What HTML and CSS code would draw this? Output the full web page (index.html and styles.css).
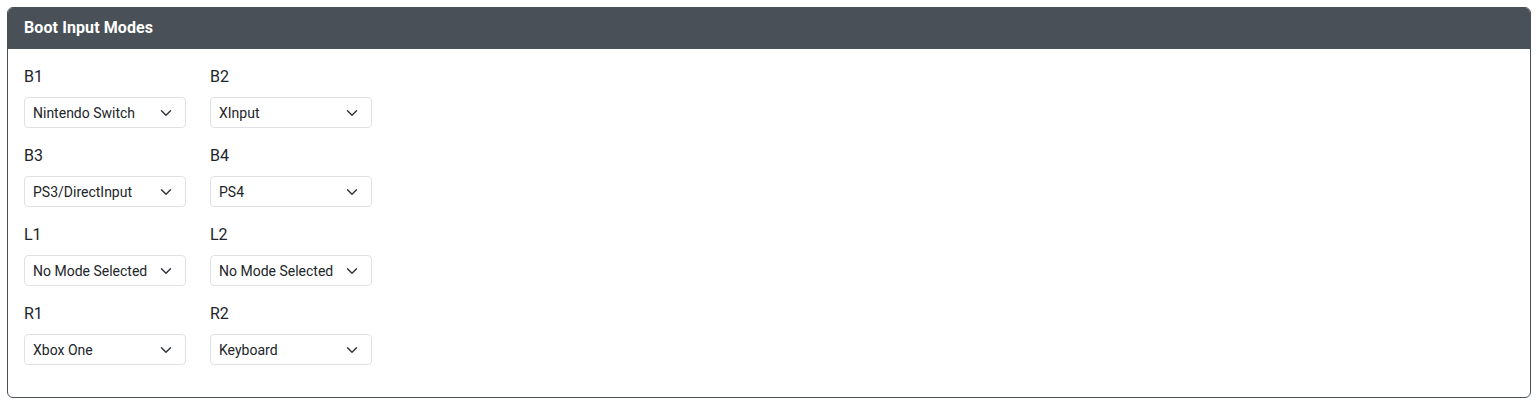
FILE: index.html
```html
<!DOCTYPE html>
<html lang="en">
<head>
<meta charset="utf-8">
<title>Boot Input Modes</title>
<link rel="stylesheet" href="styles.css">
</head>
<body>
<div class="card">
  <div class="card-header">Boot Input Modes</div>
  <div class="card-body">
    <div class="grid">
      <div class="field">
        <label for="b1">B1</label>
        <select id="b1" class="form-select"><option>Nintendo Switch</option></select>
      </div>
      <div class="field">
        <label for="b2">B2</label>
        <select id="b2" class="form-select"><option>XInput</option></select>
      </div>
      <div class="field">
        <label for="b3">B3</label>
        <select id="b3" class="form-select"><option>PS3/DirectInput</option></select>
      </div>
      <div class="field">
        <label for="b4">B4</label>
        <select id="b4" class="form-select"><option>PS4</option></select>
      </div>
      <div class="field">
        <label for="l1">L1</label>
        <select id="l1" class="form-select"><option>No Mode Selected</option></select>
      </div>
      <div class="field">
        <label for="l2">L2</label>
        <select id="l2" class="form-select"><option>No Mode Selected</option></select>
      </div>
      <div class="field">
        <label for="r1">R1</label>
        <select id="r1" class="form-select"><option>Xbox One</option></select>
      </div>
      <div class="field">
        <label for="r2">R2</label>
        <select id="r2" class="form-select"><option>Keyboard</option></select>
      </div>
    </div>
  </div>
</div>
</body>
</html>
```
FILE: styles.css
```css
html, body {
  margin: 0;
  padding: 0;
  background: #fff;
}
body {
  padding: 7px 9px 0 7px;
  font-family: Roboto, "Noto Sans", sans-serif;
  color: #212529;
  font-size: 16px;
  line-height: 24px;
}
.card {
  border: 1px solid #495057;
  border-radius: 6px;
  overflow: hidden;
  background: #fff;
}
.card-header {
  background: #495057;
  color: #fff;
  font-weight: 700;
  padding: 8px 16px;
  font-size: 16px;
  line-height: 24px;
  letter-spacing: 0.1px;
  border-bottom: 1px solid #495057;
}
.card-body {
  padding: 16px;
}
.grid {
  display: grid;
  grid-template-columns: 162px 162px;
  column-gap: 24px;
}
.field {
  display: flex;
  flex-direction: column;
  margin-bottom: 16px;
}
.field label {
  display: block;
  margin-bottom: 8px;
  font-size: 16px;
  line-height: 24px;
  color: #212529;
}
.form-select {
  -webkit-appearance: none;
  appearance: none;
  display: block;
  width: 100%;
  height: 31px;
  box-sizing: border-box;
  margin: 0;
  padding: 5px 36px 3px 8px;
  font-family: inherit;
  font-size: 14px;
  line-height: 21px;
  color: #212529;
  background-color: #fff;
  background-image: url("data:image/svg+xml,%3csvg xmlns='http://www.w3.org/2000/svg' viewBox='0 0 16 16'%3e%3cpath fill='none' stroke='%23343a40' stroke-linecap='round' stroke-linejoin='round' stroke-width='2' d='m2 5 6 6 6-6'/%3e%3c/svg%3e");
  background-repeat: no-repeat;
  background-position: right 11px center;
  background-size: 16px 12px;
  border: 1px solid #dee2e6;
  border-radius: 4px;
}
```
